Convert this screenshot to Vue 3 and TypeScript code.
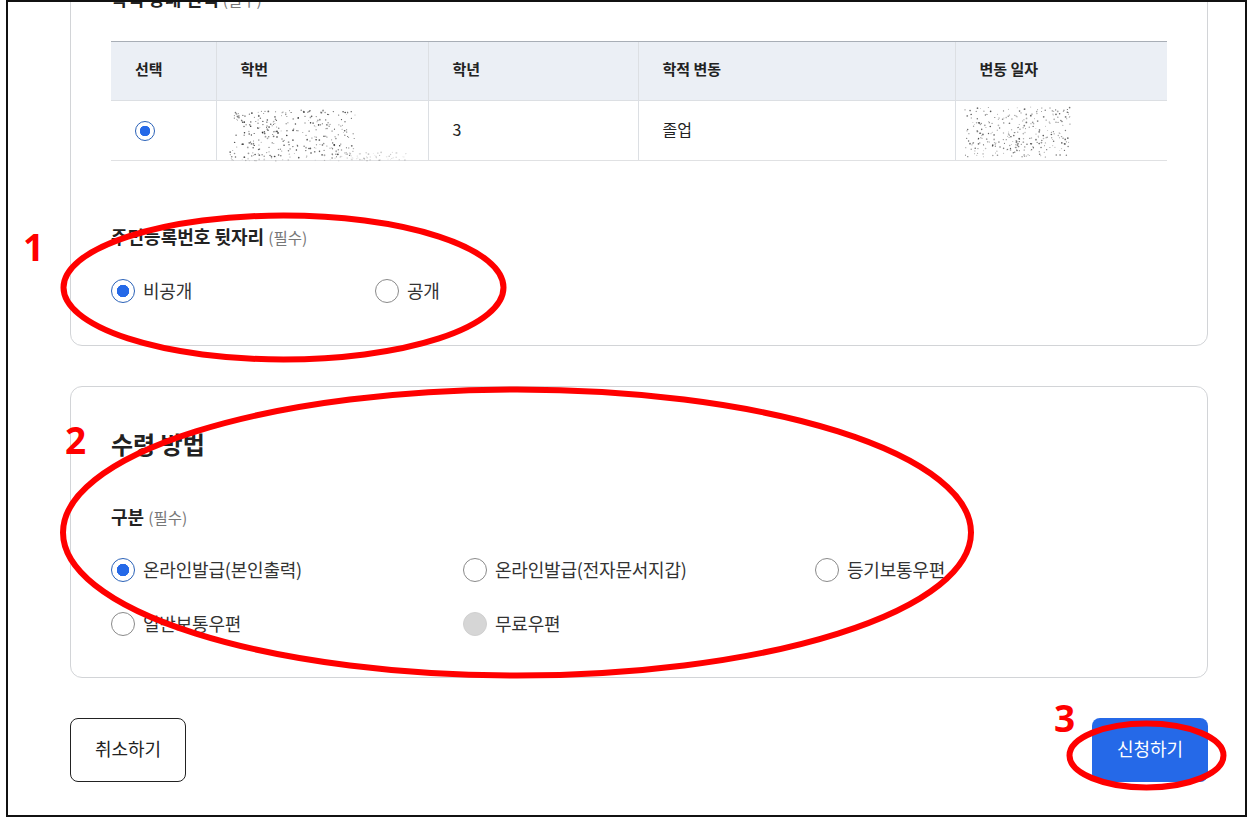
<script setup lang="ts">
interface Dot { x: number; y: number; r: number; o: number }

function makeDots(seed: number, count: number, w: number, h: number, ox: number, oy: number): Dot[] {
  let s = seed
  const rnd = () => {
    s = (s * 16807) % 2147483647
    return s / 2147483647
  }
  const dots: Dot[] = []
  for (let i = 0; i < count; i++) {
    dots.push({
      x: ox + rnd() * w,
      y: oy + rnd() * h,
      r: 0.45 + rnd() * 0.45,
      o: 0.35 + rnd() * 0.6,
    })
  }
  return dots
}

const idDots: Dot[] = [
  ...makeDots(4711, 300, 125, 48, 13, 8),
  ...makeDots(991, 50, 75, 8, 115, 50).map((d) => ({ ...d, o: d.o * 0.3 })),
  ...makeDots(313, 30, 160, 3, 14, 56).map((d) => ({ ...d, o: d.o * 0.3 })),
]
const dateDots: Dot[] = makeDots(2027, 300, 105, 50, 9, 5).map((d) => ({ ...d, o: d.o * 0.8 }))

const residentOptions = [
  { label: '비공개', state: 'on' },
  { label: '공개', state: 'off' },
]
const receiptOptions = [
  { label: '온라인발급(본인출력)', state: 'on' },
  { label: '온라인발급(전자문서지갑)', state: 'off' },
  { label: '등기보통우편', state: 'off' },
  { label: '일반보통우편', state: 'off' },
  { label: '무료우편', state: 'disabled' },
]
</script>

<template>
  <div class="frame">
    <section class="card first">
      <h3 class="label title-clipped">학적 상태 선택 <span class="req">(필수)</span></h3>
      <table class="tbl">
        <colgroup>
          <col class="c1" /><col class="c2" /><col class="c3" /><col class="c4" /><col class="c5" />
        </colgroup>
        <thead>
          <tr>
            <th>선택</th>
            <th>학번</th>
            <th>학년</th>
            <th>학적 변동</th>
            <th>변동 일자</th>
          </tr>
        </thead>
        <tbody>
          <tr>
            <td class="pick"><span class="radio small on"></span></td>
            <td class="noise">
              <svg class="speckle" width="212" height="58" viewBox="0 0 212 58">
                <circle v-for="(d, i) in idDots" :key="i" :cx="d.x" :cy="d.y" :r="d.r" fill="#222" :opacity="d.o" />
              </svg>
            </td>
            <td>3</td>
            <td>졸업</td>
            <td class="noise">
              <svg class="speckle" width="212" height="58" viewBox="0 0 212 58">
                <circle v-for="(d, i) in dateDots" :key="i" :cx="d.x" :cy="d.y" :r="d.r" fill="#222" :opacity="d.o" />
              </svg>
            </td>
          </tr>
        </tbody>
      </table>

      <h4 class="label resident">주민등록번호 뒷자리 <span class="req">(필수)</span></h4>
      <div class="options two">
        <label v-for="o in residentOptions" :key="o.label" class="option">
          <span class="radio" :class="o.state"></span>
          <span class="option-text">{{ o.label }}</span>
        </label>
      </div>
    </section>

    <section class="card second">
      <h2 class="heading">수령 방법</h2>
      <h4 class="label kind">구분 <span class="req">(필수)</span></h4>
      <div class="options three">
        <label v-for="o in receiptOptions" :key="o.label" class="option">
          <span class="radio" :class="o.state"></span>
          <span class="option-text">{{ o.label }}</span>
        </label>
      </div>
    </section>

    <div class="actions">
      <button class="btn ghost" type="button">취소하기</button>
      <button class="btn primary" type="button">신청하기</button>
    </div>

    <svg class="marks" width="1248" height="817" viewBox="0 0 1248 817" fill="none" stroke="#ff0000" stroke-width="6">
      <ellipse cx="283.5" cy="287.5" rx="220" ry="72" />
      <ellipse cx="517" cy="532.5" rx="454" ry="143" />
      <ellipse cx="1146.5" cy="755.5" rx="77" ry="32" />
    </svg>
    <span class="num n1">1</span>
    <span class="num n2">2</span>
    <span class="num n3">3</span>
  </div>
</template>

<style>
html, body { margin: 0; background: #fff; }
</style>

<style scoped>
.frame {
  position: relative;
  box-sizing: border-box;
  width: 1241px;
  height: 817px;
  margin-left: 6px;
  padding: 0 37px 0 62px;
  border: 2px solid #111;
  overflow: hidden;
  background: #fff;
  color: #222;
  font-family: "Noto Sans CJK KR", "Noto Sans", sans-serif;
}
.card {
  box-sizing: border-box;
  border: 1px solid #d2d4d7;
  border-radius: 12px;
  padding: 40px;
}
.first { margin-top: -57px; padding-bottom: 42px; }
.second { margin-top: 40px; height: 292px; }
.label {
  margin: 0;
  height: 24px;
  font-size: 18px;
  line-height: 20px;
  font-weight: 700;
}
.req { font-size: 15.5px; line-height: 1; font-weight: 400; color: #777; }
.title-clipped { margin-bottom: 31px; line-height: 24px; }
.resident { margin-top: 65px; }
.kind { margin-top: 43px; }
.heading {
  margin: 0;
  height: 36px;
  font-size: 24px;
  line-height: 34px;
  font-weight: 700;
}
.tbl {
  width: 1056px;
  table-layout: fixed;
  border-collapse: collapse;
  font-size: 15px;
}
.c1 { width: 105px; }
.c2 { width: 212px; }
.c3 { width: 210px; }
.c4 { width: 317px; }
.c5 { width: 212px; }
.tbl th {
  height: 59px;
  padding: 0 24px 5px;
  box-sizing: border-box;
  text-align: left;
  font-weight: 700;
  background: #ebeff5;
  border-top: 1px solid #a8aeb6;
  border-bottom: 1px solid #dcdfe3;
  border-left: 1px solid #dcdfe3;
}
.tbl td {
  height: 60px;
  padding: 0 24px 4px;
  box-sizing: border-box;
  font-size: 16px;
  line-height: 24px;
  border-bottom: 1px solid #e0e1e3;
  border-left: 1px solid #dcdfe3;
}
.tbl th:first-child, .tbl td:first-child { border-left: 0; }
.tbl td.pick { padding-bottom: 0; }
.tbl td.noise { padding: 0; line-height: 0; }
.speckle { display: block; overflow: visible; }
.options { display: grid; margin-top: 29px; }
.two { grid-template-columns: repeat(2, 264px); }
.three { grid-template-columns: repeat(3, 352px); row-gap: 30px; margin-top: 28px; }
.option {
  display: flex;
  align-items: center;
  gap: 8px;
  height: 24px;
  font-size: 18px;
  line-height: 22px;
  letter-spacing: -0.2px;
  color: #333;
}
.option-text { padding-bottom: 2px; }
.radio {
  flex: none;
  display: block;
  box-sizing: border-box;
  width: 24px;
  height: 24px;
  border-radius: 50%;
  border: 1px solid #8a8a8a;
  background: #fff;
}
.radio.small { width: 20px; height: 20px; }
.radio.on {
  border: 1.5px solid #2b62b8;
  background: radial-gradient(circle, #2569e8 0 6px, #fff 6.5px);
}
.radio.small.on { background: radial-gradient(circle, #2569e8 0 5px, #fff 5.5px); }
.radio.disabled { background: #d6d6d6; border-color: #d0d0d0; }
.actions {
  display: flex;
  justify-content: space-between;
  margin-top: 40px;
}
.btn {
  box-sizing: border-box;
  width: 116px;
  height: 64px;
  padding: 0 0 4px;
  border-radius: 8px;
  font-family: inherit;
  font-size: 18px;
}
.ghost { background: #fff; border: 1px solid #222; color: #222; }
.primary { background: #2569e8; border: 0; color: #fff; }
.marks {
  position: absolute;
  left: -8px;
  top: -2px;
  pointer-events: none;
}
.num {
  position: absolute;
  color: #ff0000;
  font-family: "Noto Sans", sans-serif;
  font-size: 37px;
  font-weight: 700;
  line-height: 38px;
}
.n1 { left: 15px; top: 226px; }
.n2 { left: 57px; top: 419px; }
.n3 { left: 1046px; top: 697px; }
</style>
